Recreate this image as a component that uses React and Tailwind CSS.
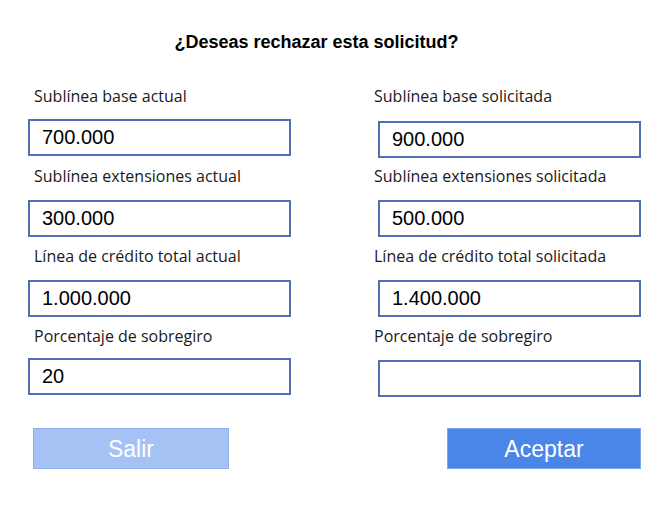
import React from 'react'

const fields = [
  [
    { label: 'Sublínea base actual', value: '700.000', gap: 'mt-[14px]' },
    { label: 'Sublínea base solicitada', value: '900.000', gap: 'mt-[16px]' },
  ],
  [
    { label: 'Sublínea extensiones actual', value: '300.000', gap: 'mt-[15px]' },
    { label: 'Sublínea extensiones solicitada', value: '500.000', gap: 'mt-[15px]' },
  ],
  [
    { label: 'Línea de crédito total actual', value: '1.000.000', gap: 'mt-[15px]' },
    { label: 'Línea de crédito total solicitada', value: '1.400.000', gap: 'mt-[15px]' },
  ],
  [
    { label: 'Porcentaje de sobregiro', value: '20', gap: 'mt-[13px]' },
    { label: 'Porcentaje de sobregiro', value: '', gap: 'mt-[15px]' },
  ],
]

function Field({ label, value, gap, right }) {
  return (
    <div className="flex flex-col">
      <label
        className={`${right ? 'ml-[-4px]' : 'pl-[6px]'} h-[18px] whitespace-nowrap text-[16px] leading-[18px] text-[#1a1a1a] font-['Open_Sans',sans-serif]`}
      >
        {label}
      </label>
      <input
        readOnly
        value={value}
        className={`${gap} h-[37px] w-full border-2 border-[#5170b3] bg-white px-[12px] text-[20px] text-black font-['Liberation_Sans',Arial,sans-serif] outline-none`}
      />
    </div>
  )
}

export default function App() {
  return (
    <div className="w-[668px] h-[505px] bg-white pt-[32px] pl-[28px] pr-[27px]">
      <h1 className="pr-[36px] text-center text-[18px] leading-[20px] font-bold text-black font-['Liberation_Sans',Arial,sans-serif]">
        ¿Deseas rechazar esta solicitud?
      </h1>

      <div className="mt-[35px] flex flex-col">
        {fields.map((row, i) => (
          <div key={i} className="h-[80px] grid grid-cols-[263px_263px] justify-between">
            {row.map((f, j) => (
              <Field key={j} right={j === 1} {...f} />
            ))}
          </div>
        ))}
      </div>

      <div className="mt-[21px] flex justify-between pl-[5px]">
        <button className="h-[41px] w-[196px] border border-[#8db0ef] bg-[#a4c2f4] pt-[1px] text-[23px] text-white font-['Liberation_Sans',Arial,sans-serif]">
          Salir
        </button>
        <button className="h-[41px] w-[194px] border border-[#7ea7ee] bg-[#4a86e8] pt-[1px] text-[23px] text-white font-['Liberation_Sans',Arial,sans-serif]">
          Aceptar
        </button>
      </div>
    </div>
  )
}
